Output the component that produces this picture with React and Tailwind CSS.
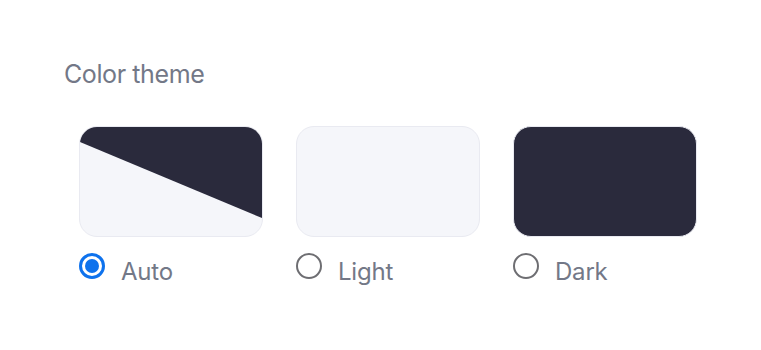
import React from "react";

function Radio({ checked }) {
  if (checked) {
    return (
      <span className="flex h-[26px] w-[26px] shrink-0 items-center justify-center rounded-full border-[3px] border-[#0e72ed]">
        <span className="h-[14px] w-[14px] rounded-full bg-[#0e72ed]" />
      </span>
    );
  }
  return <span className="h-[26px] w-[26px] shrink-0 rounded-full border-2 border-[#6e6e72]" />;
}

function Option({ label, checked, children, cardClass }) {
  return (
    <div className="flex w-[184px] flex-col">
      <div className={"relative h-[111px] w-[184px] overflow-hidden rounded-[18px] border border-[#e9eaf1] " + cardClass}>
        {children}
      </div>
      <div className="mt-[16px] flex items-start gap-[16px]">
        <Radio checked={checked} />
        <span className="mt-[5px] text-[24px] leading-[28px] tracking-[-0.2px] text-[#737887]">{label}</span>
      </div>
    </div>
  );
}

export default function App() {
  return (
    <div className="h-[350px] w-[761px] bg-white pl-[64px] pt-[57px]" style={{ fontFamily: "Inter, 'Noto Sans', sans-serif" }}>
      <div className="text-[25px] leading-[34px] tracking-[-0.4px] text-[#737887]">Color theme</div>
      <div className="mt-[35px] flex gap-[33px] pl-[15px]">
        <Option label="Auto" checked cardClass="bg-[#f5f6fa]">
          <svg className="absolute inset-0 h-full w-full" viewBox="0 0 182 109" preserveAspectRatio="none">
            <polygon points="0,15 0,0 182,0 182,91" fill="#2a2a3c" />
          </svg>
        </Option>
        <Option label="Light" cardClass="bg-[#f5f6fa]" />
        <Option label="Dark" cardClass="bg-[#2a2a3c]" />
      </div>
    </div>
  );
}
